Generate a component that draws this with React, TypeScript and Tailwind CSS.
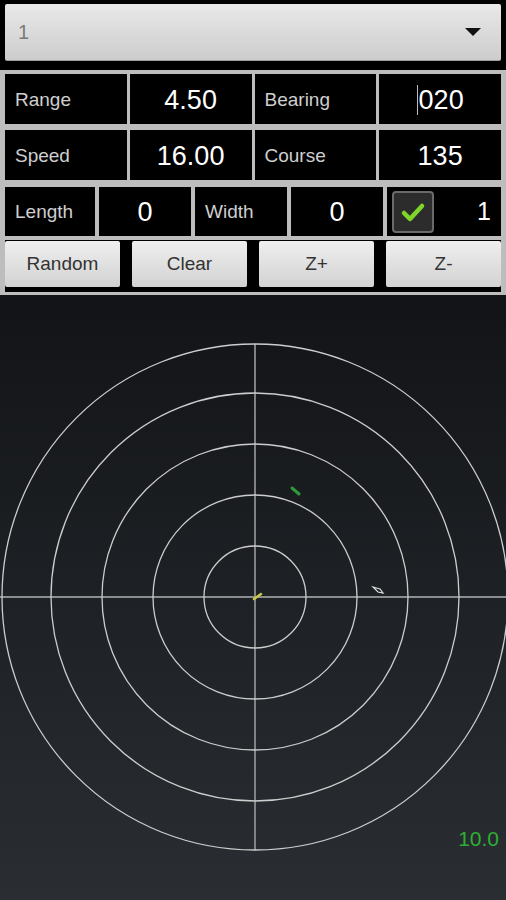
import React from "react";

const font = { fontFamily: "'Liberation Sans', Arial, sans-serif" };

function Label({ text }: { text: string }) {
  return (
    <div className="bg-black flex items-center pl-[10px] pt-[2px] text-[19px] text-[#cfcfcf]">
      {text}
    </div>
  );
}

function Value({ text, cursor }: { text: string; cursor?: boolean }) {
  return (
    <div className="bg-black flex items-center justify-center pt-[2px] text-[27px] text-white">
      {cursor && <span className="w-[1px] h-[30px] bg-[#bbbbbb] mr-[1px]" />}
      {text}
    </div>
  );
}

function Radar() {
  const cx = 255;
  const cy = 302;
  const rings = [51, 102, 153, 204, 253];
  return (
    <div className="relative flex-1 bg-gradient-to-b from-[#121417] to-[#2a2e33] overflow-hidden">
      <svg width="506" height="604" className="block">
        <line x1={0} y1={cy} x2={506} y2={cy} stroke="#8c8d8e" strokeWidth="1.8" />
        <line x1={cx} y1={cy - 253} x2={cx} y2={cy + 253} stroke="#8c8d8e" strokeWidth="1.8" />
        {rings.map((r) => (
          <circle key={r} cx={cx} cy={cy} r={r} fill="none" stroke="#cdcdcd" strokeWidth="1.3" />
        ))}
        <line x1={292} y1={193} x2={299} y2={199} stroke="#2e9a3c" strokeWidth="3" strokeLinecap="round" />
        <line x1={254} y1={304} x2={261} y2={299} stroke="#c9c94a" strokeWidth="2.5" strokeLinecap="round" />
        <path d="M373 292 L380 294 L383 298 L378 297 Z" fill="none" stroke="#e0e0e0" strokeWidth="1.2" />
      </svg>
      <div className="absolute right-[7px] bottom-[46px] text-[21px] text-[#2fae35]">10.0</div>
    </div>
  );
}

export default function App() {
  return (
    <div className="w-[506px] h-[900px] bg-black flex flex-col" style={font}>
      {/* spinner */}
      <div className="pt-[4px] pb-[9px] px-[5px]">
        <div className="h-[57px] rounded-[2px] bg-gradient-to-b from-[#e9e9e9] to-[#cdcdcd] border-b border-[#a0a0a0] flex items-center justify-between pl-[13px] pr-[20px]">
          <span className="text-[20px] text-[#7a7a7a]">1</span>
          <span className="w-0 h-0 border-l-[8px] border-r-[8px] border-t-[8px] border-l-transparent border-r-transparent border-t-[#111]" />
        </div>
      </div>

      {/* table */}
      <div className="bg-[#bdbdbd] pt-[4px] pb-[3px] px-[5px]">
        <div className="grid grid-cols-4 gap-[3px] h-[50px]">
          <Label text="Range" />
          <Value text="4.50" />
          <Label text="Bearing" />
          <Value text="020" cursor />
        </div>
        <div className="grid grid-cols-4 gap-[3px] h-[50px] mt-[6px]">
          <Label text="Speed" />
          <Value text="16.00" />
          <Label text="Course" />
          <Value text="135" />
        </div>
        <div className="grid grid-cols-[90px_92px_92px_92px_1fr] gap-[4px] h-[49px] mt-[7px]">
          <Label text="Length" />
          <Value text="0" />
          <Label text="Width" />
          <Value text="0" />
          <div className="bg-black flex items-center justify-between pl-[5px] pr-[10px]">
            <div className="w-[42px] h-[42px] rounded-[4px] border-2 border-[#6a6a6a] bg-[#2c2c2c] flex items-center justify-center">
              <svg width="26" height="22" viewBox="0 0 26 22">
                <path d="M4 12 L10 18 L22 5" fill="none" stroke="#7fd62b" strokeWidth="4.5" strokeLinecap="round" strokeLinejoin="round" />
              </svg>
            </div>
            <span className="text-[25px] text-white">1</span>
          </div>
        </div>
        <div className="bg-black grid grid-cols-4 gap-[12px] pt-[1px] pb-[5px] mt-[4px]">
          {["Random", "Clear", "Z+", "Z-"].map((b) => (
            <div
              key={b}
              className="h-[46px] rounded-[2px] bg-gradient-to-b from-[#efefef] to-[#d2d2d2] flex items-center justify-center text-[19px] text-[#333]"
            >
              {b}
            </div>
          ))}
        </div>
      </div>

      <Radar />
    </div>
  );
}
